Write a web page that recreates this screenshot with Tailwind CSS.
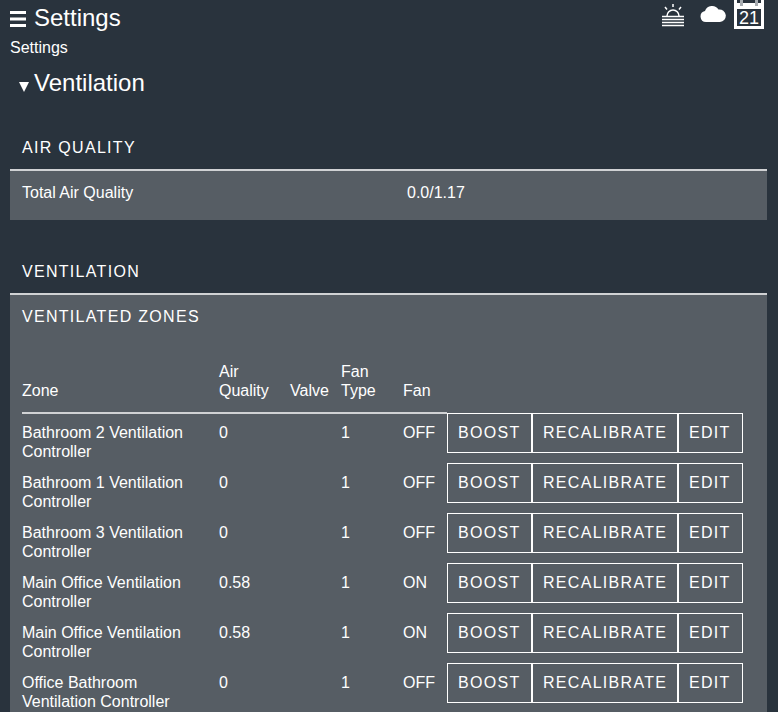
<!DOCTYPE html>
<html lang="en">
<head>
  <meta charset="UTF-8">
  <title>Settings</title>
  <script src="https://cdn.jsdelivr.net/npm/@tailwindcss/browser@4"></script>
</head>
<body class="bg-[#29333d] h-[712px] overflow-hidden text-white font-['Liberation_Sans',sans-serif] text-base">
  <!-- Top bar -->
  <header class="flex justify-between h-[37px] pl-[10px] pr-[14px]">
    <div class="flex items-center gap-2 h-9">
      <svg width="16" height="16" viewBox="0 0 16 16" class="mt-px"><path fill="#fff" d="M0 0h16v3H0zM0 6.500h16v3H0zM0 13h16v3H0z"/></svg>
      <span class="text-2xl leading-9">Settings</span>
    </div>
    <div class="flex items-start">
      <svg width="24" height="24" viewBox="0 0 24 24" class="mt-[3px]" fill="none" stroke="#fff">
        <path stroke-width="1.500" d="M6 13a6 6 0 0 1 12 0M12 1v3M4 4l2 2.500M20 4l-2 2.500"/>
        <path stroke-width="1.500" d="M1 13.500h22M1 16.500h22M1 19.500h22M1 22.500h22"/>
      </svg>
      <svg width="26" height="18" viewBox="0 0 26 18" class="ml-[15px] mt-[5px]"><path fill="#fff" d="M6 17a5.500 5.500 0 0 1-1-10.900A7.500 7.500 0 0 1 18.500 4.500 6.300 6.300 0 1 1 20 17z"/></svg>
      <div class="relative ml-[8px] w-[30px] h-[29px] flex flex-col">
        <svg width="30" height="10" viewBox="0 0 30 10" class="absolute top-0 left-0">
          <path fill="#fff" d="M0 0h3v3h24V0h3v9H0z"/>
          <path fill="#a8adb2" d="M6 0h3v6H6zM21 0h3v6h-3z"/>
        </svg>
        <div class="mt-[9px] h-[20px] border-x-[3px] border-b-[3px] border-white text-lg leading-[18px] text-center">21</div>
      </div>
    </div>
  </header>

  <div class="pl-[10px] leading-[22px]">Settings</div>

  <div class="flex items-center h-[48px] pl-[19px]">
    <span class="w-0 h-0 mt-[7px] border-x-[5px] border-x-transparent border-t-[10px] border-t-white"></span>
    <h1 class="text-2xl ml-[5px]">Ventilation</h1>
  </div>

  <main class="ml-[10px] mr-[11px] mt-[18px]">
    <!-- Air quality -->
    <h2 class="px-3 pt-[2px] h-[46px] leading-[24px] tracking-[1.300px] flex items-center border-b-2 border-[#d0d2d4]">AIR QUALITY</h2>
    <section class="bg-[#565d64] h-[49px] px-3 pt-[12px] flex leading-[20px]">
      <div class="w-[385px]">Total Air Quality</div>
      <div>0.0/1.17</div>
    </section>

    <!-- Ventilation -->
    <h2 class="mt-[29px] px-3 pt-[2px] h-[46px] leading-[24px] tracking-[1.300px] flex items-center border-b-2 border-[#d0d2d4]">VENTILATION</h2>
    <section class="bg-[#565d64] h-[417px] overflow-hidden px-3">
      <h3 class="pt-[10px] leading-[24px] tracking-[1.300px]">VENTILATED ZONES</h3>
      <table class="mt-[33px] border-separate border-spacing-0 text-left leading-[19px]">
        <thead>
          <tr class="align-bottom">
            <th class="font-normal w-[197px] pb-[12px] border-b-2 border-[#d0d2d4]">Zone</th>
            <th class="font-normal w-[71px] pb-[12px] border-b-2 border-[#d0d2d4]">Air<br>Quality</th>
            <th class="font-normal w-[51px] pb-[12px] border-b-2 border-[#d0d2d4]">Valve</th>
            <th class="font-normal w-[62px] pb-[12px] border-b-2 border-[#d0d2d4]">Fan<br>Type</th>
            <th class="font-normal w-[44px] pb-[12px] border-b-2 border-[#d0d2d4]">Fan</th>
            <th></th>
          </tr>
        </thead>
        <tbody>
          <tr class="align-top h-[50px]">
            <td class="pt-[9px]">Bathroom 2 Ventilation<br>Controller</td>
            <td class="pt-[9px]">0</td>
            <td></td>
            <td class="pt-[9px]">1</td>
            <td class="pt-[9px]">OFF</td>
            <td class="p-0">
              <div class="flex -mt-px tracking-[1.300px]">
                <button class="h-10 w-[85px] px-[10px] pb-[2px] border border-white text-left">BOOST</button>
                <button class="h-10 w-[146px] px-[10px] pb-[2px] border border-white text-left">RECALIBRATE</button>
                <button class="h-10 w-[65px] px-[10px] pb-[2px] border border-white text-left">EDIT</button>
              </div>
            </td>
          </tr>
          <tr class="align-top h-[50px]">
            <td class="pt-[9px]">Bathroom 1 Ventilation<br>Controller</td>
            <td class="pt-[9px]">0</td>
            <td></td>
            <td class="pt-[9px]">1</td>
            <td class="pt-[9px]">OFF</td>
            <td class="p-0">
              <div class="flex -mt-px tracking-[1.300px]">
                <button class="h-10 w-[85px] px-[10px] pb-[2px] border border-white text-left">BOOST</button>
                <button class="h-10 w-[146px] px-[10px] pb-[2px] border border-white text-left">RECALIBRATE</button>
                <button class="h-10 w-[65px] px-[10px] pb-[2px] border border-white text-left">EDIT</button>
              </div>
            </td>
          </tr>
          <tr class="align-top h-[50px]">
            <td class="pt-[9px]">Bathroom 3 Ventilation<br>Controller</td>
            <td class="pt-[9px]">0</td>
            <td></td>
            <td class="pt-[9px]">1</td>
            <td class="pt-[9px]">OFF</td>
            <td class="p-0">
              <div class="flex -mt-px tracking-[1.300px]">
                <button class="h-10 w-[85px] px-[10px] pb-[2px] border border-white text-left">BOOST</button>
                <button class="h-10 w-[146px] px-[10px] pb-[2px] border border-white text-left">RECALIBRATE</button>
                <button class="h-10 w-[65px] px-[10px] pb-[2px] border border-white text-left">EDIT</button>
              </div>
            </td>
          </tr>
          <tr class="align-top h-[50px]">
            <td class="pt-[9px]">Main Office Ventilation<br>Controller</td>
            <td class="pt-[9px]">0.58</td>
            <td></td>
            <td class="pt-[9px]">1</td>
            <td class="pt-[9px]">ON</td>
            <td class="p-0">
              <div class="flex -mt-px tracking-[1.300px]">
                <button class="h-10 w-[85px] px-[10px] pb-[2px] border border-white text-left">BOOST</button>
                <button class="h-10 w-[146px] px-[10px] pb-[2px] border border-white text-left">RECALIBRATE</button>
                <button class="h-10 w-[65px] px-[10px] pb-[2px] border border-white text-left">EDIT</button>
              </div>
            </td>
          </tr>
          <tr class="align-top h-[50px]">
            <td class="pt-[9px]">Main Office Ventilation<br>Controller</td>
            <td class="pt-[9px]">0.58</td>
            <td></td>
            <td class="pt-[9px]">1</td>
            <td class="pt-[9px]">ON</td>
            <td class="p-0">
              <div class="flex -mt-px tracking-[1.300px]">
                <button class="h-10 w-[85px] px-[10px] pb-[2px] border border-white text-left">BOOST</button>
                <button class="h-10 w-[146px] px-[10px] pb-[2px] border border-white text-left">RECALIBRATE</button>
                <button class="h-10 w-[65px] px-[10px] pb-[2px] border border-white text-left">EDIT</button>
              </div>
            </td>
          </tr>
          <tr class="align-top h-[50px]">
            <td class="pt-[9px]">Office Bathroom<br>Ventilation Controller</td>
            <td class="pt-[9px]">0</td>
            <td></td>
            <td class="pt-[9px]">1</td>
            <td class="pt-[9px]">OFF</td>
            <td class="p-0">
              <div class="flex -mt-px tracking-[1.300px]">
                <button class="h-10 w-[85px] px-[10px] pb-[2px] border border-white text-left">BOOST</button>
                <button class="h-10 w-[146px] px-[10px] pb-[2px] border border-white text-left">RECALIBRATE</button>
                <button class="h-10 w-[65px] px-[10px] pb-[2px] border border-white text-left">EDIT</button>
              </div>
            </td>
          </tr>
        </tbody>
      </table>
    </section>
  </main>
</body>
</html>
